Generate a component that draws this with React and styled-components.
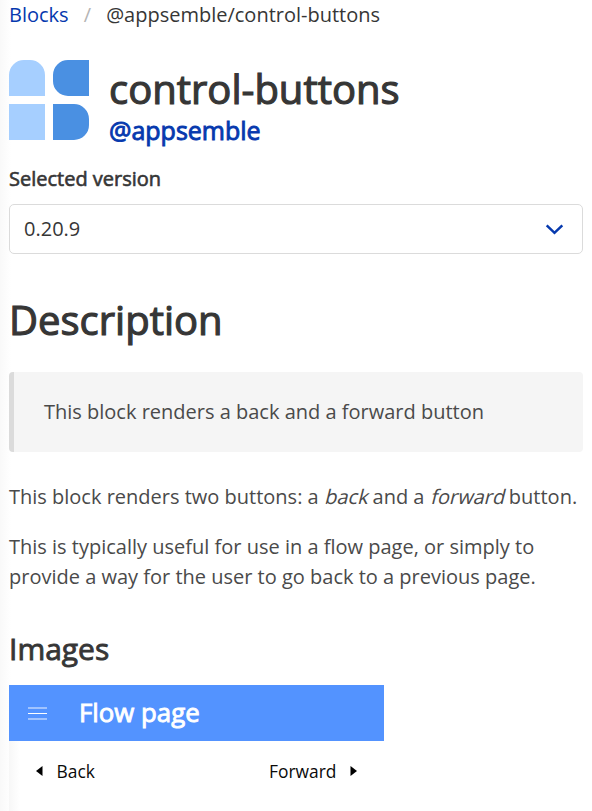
import React from 'react';
import styled, { createGlobalStyle } from 'styled-components';

const Global = createGlobalStyle`
  *, *::before, *::after { box-sizing: border-box; }
  body { margin: 0; background: #fff; color: #4a4a4a; font: 20px/30px "Open Sans", sans-serif; overflow: hidden; }
`;
const Page = styled.main`
  height: 811px;
  padding: 0 9px;
  overflow: hidden;
  background: linear-gradient(90deg, #f9f9f9 0, #fff 11px);
`;
const Breadcrumb = styled.nav`
  display: flex;
  height: 30px;
  color: #363636;
  a { color: #0639ae; }
  span { width: 37.5px; text-align: center; color: #b5b5b5; }
`;
const Header = styled.header`
  display: flex;
  gap: 20px;
  height: 80px;
  margin-top: 30px;
`;
const Title = styled.h1`
  margin: 6px 0 0;
  font-size: 40px;
  line-height: 45px;
  font-weight: 400;
  color: #363636;
  -webkit-text-stroke: 1.15px currentColor;
`;
const Organization = styled.p`
  margin: 4px 0 0;
  font-size: 25px;
  line-height: 31px;
  color: #0639ae;
  -webkit-text-stroke: 0.9px currentColor;
`;
const Label = styled.label`
  display: block;
  margin: 24px 0 10px;
  color: #363636;
  -webkit-text-stroke: 0.6px currentColor;
`;
const Select = styled.div`
  display: flex;
  align-items: center;
  justify-content: space-between;
  height: 50px;
  padding: 0 18px 0 14px;
  border: 1px solid #dbdbdb;
  border-radius: 5px;
  background: #fff;
  color: #363636;
`;
const Heading = styled.h2`
  margin: ${(p) => p.$top}px 0 0;
  font-size: ${(p) => p.$size}px;
  line-height: ${(p) => p.$line}px;
  font-weight: 400;
  color: #363636;
  -webkit-text-stroke: ${(p) => p.$size / 35}px currentColor;
`;
const Quote = styled.blockquote`
  margin: 30px 0 30px;
  height: 80px;
  padding: 25px 30px;
  border-left: 5px solid #dbdbdb;
  border-radius: 4px;
  background: #f5f5f5;
`;
const Paragraph = styled.p`
  margin: 0 0 20px;
  white-space: nowrap;
`;
const Emphasis = styled.em`
  display: inline-block;
  font-style: normal;
  transform: skewX(-14deg);
  transform-origin: 0 22px;
`;
const Preview = styled.section`
  width: 375px;
  height: 130px;
  margin-top: 18px;
  background: linear-gradient(90deg, #f7f7f7 0, #fff 11px);
`;
const Toolbar = styled.div`
  display: flex;
  align-items: center;
  gap: 32px;
  height: 56px;
  padding: 0 0 1px 19px;
  background: #5393ff;
  color: #fff;
  font-size: 25.8px;
  line-height: 28px;
  -webkit-text-stroke: 0.9px currentColor;
`;
const ToolbarTitle = styled.span`
  padding-bottom: 1px;
`;
const Controls = styled.div`
  display: flex;
  justify-content: space-between;
  padding: 15px 27px;
  color: #0a0a0a;
  font-size: 17.4px;
`;
const Control = styled.span`
  display: flex;
  align-items: center;
  gap: 13.5px;
`;

export default function App() {
  return (
    <>
      <Global />
      <Page>
        <Breadcrumb><a>Blocks</a><span>/</span>@appsemble/control-buttons</Breadcrumb>
        <Header>
          <svg width="80" height="80" viewBox="0 0 80 80">
            <path d="M0 36V15a15 15 0 0 1 15-15h6a15 15 0 0 1 15 15v21ZM0 44h36v36H0Z" fill="#a6cfff" />
            <path d="M80 0v36H59a15 15 0 0 1-15-15v-6a15 15 0 0 1 15-15ZM44 44h21a15 15 0 0 1 15 15v6a15 15 0 0 1-15 15H44Z" fill="#4a90e2" />
          </svg>
          <div><Title>control-buttons</Title><Organization>@appsemble</Organization></div>
        </Header>
        <Label>Selected version</Label>
        <Select>
          0.20.9
          <svg width="19" height="12" viewBox="0 0 19 12" fill="none" stroke="#0639ae" strokeWidth="2.5"><path d="m1.7 2.3 7.8 7.5 7.8-7.5" /></svg>
        </Select>
        <Heading $size={40} $line={45} $top={43}>Description</Heading>
        <Quote>This block renders a back and a forward button</Quote>
        <Paragraph>This block renders two buttons: a <Emphasis>back</Emphasis> and a <Emphasis>forward</Emphasis> button.</Paragraph>
        <Paragraph>This is typically useful for use in a flow page, or simply to<br />provide a way for the user to go back to a previous page.</Paragraph>
        <Heading $size={30} $line={36} $top={39}>Images</Heading>
        <Preview>
          <Toolbar>
            <svg width="19" height="14" viewBox="0 0 19 14" stroke="#fff" strokeWidth="1"><path d="M0 7.5h19" /><path d="M0 2h19M0 13h19" strokeOpacity=".9" /></svg>
            <ToolbarTitle>Flow page</ToolbarTitle>
          </Toolbar>
          <Controls>
            <Control><svg width="7" height="10" viewBox="0 0 7 10"><path d="M6.5 0v10L0 5Z" /></svg>Back</Control>
            <Control>Forward<svg width="7" height="10" viewBox="0 0 7 10"><path d="M.5 0v10L7 5Z" /></svg></Control>
          </Controls>
        </Preview>
      </Page>
    </>
  );
}
